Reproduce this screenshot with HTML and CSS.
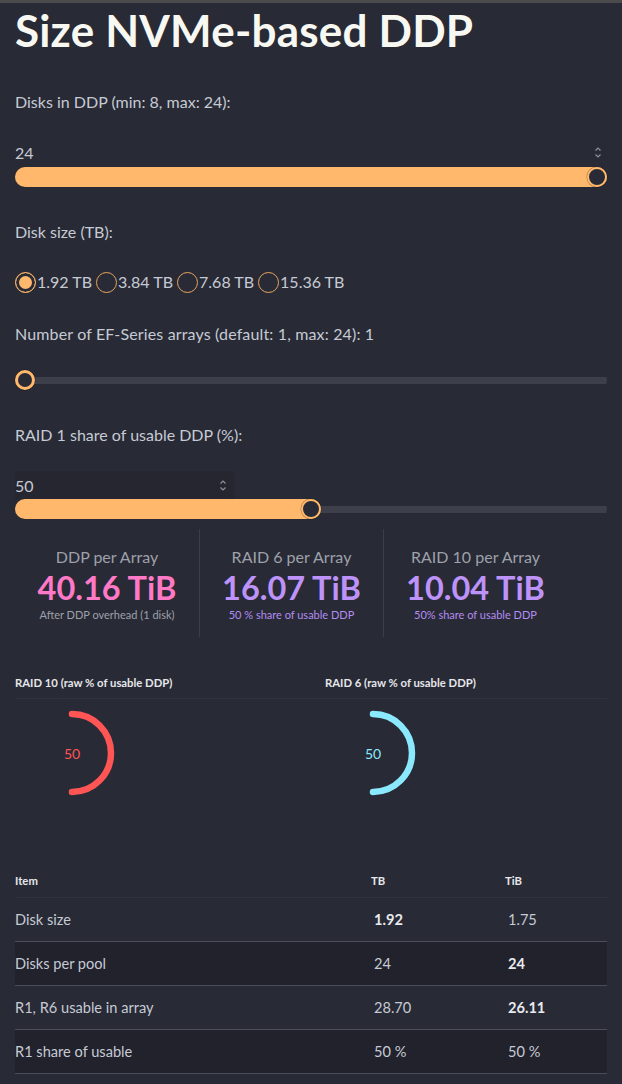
FILE: index.html
```html
<!DOCTYPE html>
<html lang="en">
<head>
<meta charset="utf-8">
<title>Size NVMe-based DDP</title>
<link rel="stylesheet" href="styles.css">
</head>
<body>
<main class="page">
  <h1 class="title">Size NVMe-based DDP</h1>

  <section class="field">
    <label class="label label-first">Disks in DDP (min: 8, max: 24):</label>
    <div class="num num-full">
      <span>24</span>
      <svg class="spin" width="8" height="13" viewBox="0 0 8 13"><path d="M1.5 4.5 L4 2 L6.5 4.5 M1.5 8.5 L4 11 L6.5 8.5"/></svg>
    </div>
    <div class="range">
      <div class="fill" style="width:100%"><span class="thumb"></span></div>
    </div>
  </section>

  <section class="field">
    <label class="label label-gap">Disk size (TB):</label>
    <div class="radios">
      <label class="radio-item"><span class="radio checked"></span>1.92 TB</label>
      <label class="radio-item"><span class="radio"></span>3.84 TB</label>
      <label class="radio-item"><span class="radio"></span>7.68 TB</label>
      <label class="radio-item"><span class="radio"></span>15.36 TB</label>
    </div>
  </section>

  <section class="field">
    <label class="label label-arrays">Number of EF-Series arrays (default: 1, max: 24): 1</label>
    <div class="range range-solo">
      <div class="fill fill-empty" style="width:20px"><span class="thumb"></span></div>
    </div>
  </section>

  <section class="field">
    <label class="label label-gap">RAID 1 share of usable DDP (%):</label>
    <div class="num num-box">
      <span>50</span>
      <svg class="spin" width="8" height="13" viewBox="0 0 8 13"><path d="M1.5 4.5 L4 2 L6.5 4.5 M1.5 8.5 L4 11 L6.5 8.5"/></svg>
    </div>
    <div class="range range-flush">
      <div class="fill" style="width:calc(20px + (100% - 20px) * 0.5)"><span class="thumb"></span></div>
    </div>
  </section>

  <section class="stats">
    <div class="stat">
      <div class="stat-title">DDP per Array</div>
      <div class="stat-value pink">40.16 TiB</div>
      <div class="stat-desc">After DDP overhead (1 disk)</div>
    </div>
    <div class="stat">
      <div class="stat-title">RAID 6 per Array</div>
      <div class="stat-value purple">16.07 TiB</div>
      <div class="stat-desc purple">50 % share of usable DDP</div>
    </div>
    <div class="stat">
      <div class="stat-title">RAID 10 per Array</div>
      <div class="stat-value purple">10.04 TiB</div>
      <div class="stat-desc purple">50% share of usable DDP</div>
    </div>
  </section>

  <section class="gauges">
    <div class="gauge-heads">
      <h3 class="gauge-title">RAID 10 (raw % of usable DDP)</h3>
      <h3 class="gauge-title">RAID 6 (raw % of usable DDP)</h3>
    </div>
    <div class="gauge-row">
      <div class="gauge gauge-red">
        <svg width="88" height="88" viewBox="0 0 88 88"><path d="M44 5 A39 39 0 0 1 44 83"/></svg>
        <span class="gauge-num">50</span>
      </div>
      <div class="gauge gauge-cyan">
        <svg width="88" height="88" viewBox="0 0 88 88"><path d="M44 5 A39 39 0 0 1 44 83"/></svg>
        <span class="gauge-num">50</span>
      </div>
    </div>
  </section>

  <table class="table">
    <colgroup><col class="c1"><col class="c2"><col class="c3"></colgroup>
    <thead>
      <tr><th>Item</th><th>TB</th><th>TiB</th></tr>
    </thead>
    <tbody>
      <tr><td>Disk size</td><td class="v"><b>1.92</b></td><td class="v">1.75</td></tr>
      <tr class="zebra"><td>Disks per pool</td><td class="v">24</td><td class="v"><b>24</b></td></tr>
      <tr><td>R1, R6 usable in array</td><td class="v">28.70</td><td class="v"><b>26.11</b></td></tr>
      <tr class="zebra"><td>R1 share of usable</td><td class="v">50 %</td><td class="v">50 %</td></tr>
    </tbody>
  </table>
</main>
</body>
</html>
```

FILE: styles.css
```css
* { box-sizing: border-box; }

body {
  margin: 0;
  background: #282a36;
  border-top: 3px solid #4b4b4b;
  font-family: Lato, "Noto Sans", sans-serif;
  color: #c6cad4;
  min-height: 1084px;
}

.page { padding: 3px 15px 0; }

.title {
  margin: 0;
  font-size: 44px;
  line-height: 48px;
  font-weight: 700;
  letter-spacing: 0.2px;
  color: #f8f8f2;
}

.label {
  display: block;
  font-size: 16px;
  line-height: 24px;
}
.label-first { margin-top: 36px; }
.label-gap { margin-top: 33px; }
.label-arrays { margin-top: 28px; letter-spacing: 0.15px; }

.num {
  display: flex;
  justify-content: space-between;
  align-items: center;
  font-size: 16px;
  color: #c6cad4;
}
.num-full {
  height: 24px;
  margin-top: 26px;
  padding-right: 5px;
}
.num-box {
  width: 220px;
  height: 28px;
  margin-top: 24px;
  padding-right: 8px;
  background: #25262f;
  border-radius: 4px 4px 0 0;
}
.spin path {
  fill: none;
  stroke: #8d9099;
  stroke-width: 1.2;
}

.range {
  display: flex;
  height: 20px;
  margin-top: 3px;
  border-radius: 10px;
  background: linear-gradient(#3d3f4b, #3d3f4b) center / 100% 7px no-repeat;
}
.range-solo { margin-top: 24px; }
.range-flush { margin-top: 0; }

.fill {
  display: flex;
  justify-content: flex-end;
  height: 20px;
  border-radius: 10px;
  background: #ffb86c;
}
.fill-empty { background: transparent; }

.thumb {
  width: 20px;
  height: 20px;
  border-radius: 50%;
  background: #282a36;
  border: 2.5px solid #ffb86c;
  box-shadow: 0 0 0 0.5px rgba(0, 0, 0, 0.35);
}
.fill-empty .thumb { border-width: 3px; }

.radios {
  display: flex;
  align-items: center;
  gap: 4px;
  height: 24px;
  margin-top: 26px;
}
.radio-item {
  display: flex;
  align-items: center;
  font-size: 16px;
  line-height: 24px;
  color: #c6cad4;
}
.radio {
  width: 21px;
  height: 21px;
  margin-right: 1px;
  border-radius: 50%;
  border: 1.5px solid #e9a55e;
}
.radio.checked {
  background: #ffb86c;
  border-color: #ffb86c;
  box-shadow: inset 0 0 0 3px #282a36;
}

.stats {
  display: inline-grid;
  grid-template-columns: repeat(3, 184px);
  margin-top: 10px;
  border-radius: 12px;
  background: #282a36;
}
.stat {
  padding: 16px 6px 14px;
  text-align: center;
  border-left: 1px solid #3b3d49;
}
.stat:first-child { border-left: 0; }
.stat-title {
  font-size: 16px;
  line-height: 24px;
  color: #9ea1aa;
}
.stat-value {
  font-size: 32.5px;
  line-height: 37px;
  font-weight: 700;
}
.stat-desc {
  margin-top: 1px;
  font-size: 11px;
  line-height: 16px;
  color: #9ea1aa;
}
.pink { color: #ff79c6; }
.purple { color: #bd93f9; }
.stat-desc.purple { color: #b48df0; }

.gauges { margin-top: 38px; }
.gauge-heads {
  display: grid;
  grid-template-columns: 310px 1fr;
  padding-bottom: 7px;
  border-bottom: 1px solid #30323e;
}
.gauge-title {
  margin: 0;
  font-size: 11.3px;
  line-height: 16px;
  font-weight: 700;
  color: #e6e7ea;
}
.gauge-row {
  display: flex;
  gap: 213px;
  margin-top: 10px;
  padding-left: 13px;
}
.gauge {
  display: grid;
  place-items: center;
  width: 88px;
  height: 88px;
}
.gauge > * { grid-area: 1 / 1; }
.gauge path {
  fill: none;
  stroke-width: 6.5;
  stroke-linecap: round;
}
.gauge-num { font-size: 14px; }
.gauge-red path { stroke: #ff5555; }
.gauge-red .gauge-num { color: #ff5555; }
.gauge-cyan path { stroke: #8be9fd; }
.gauge-cyan .gauge-num { color: #8be9fd; }

.table {
  width: 100%;
  margin-top: 76px;
  border-collapse: collapse;
  table-layout: fixed;
}
.c1 { width: 356px; }
.c2 { width: 134px; }
.table th {
  padding: 0 0 8px;
  text-align: left;
  font-size: 11.3px;
  line-height: 16px;
  font-weight: 700;
  color: #e6e7ea;
  border-bottom: 1px solid #30323e;
}
.table td {
  height: 44px;
  padding: 0;
  font-size: 14.6px;
  color: #c6cad4;
  border-bottom: 1px solid #4b4d59;
}
.table td.v { padding-left: 3px; }
.table b { color: #e9eaee; }
.zebra td { background: #21222c; }
```
